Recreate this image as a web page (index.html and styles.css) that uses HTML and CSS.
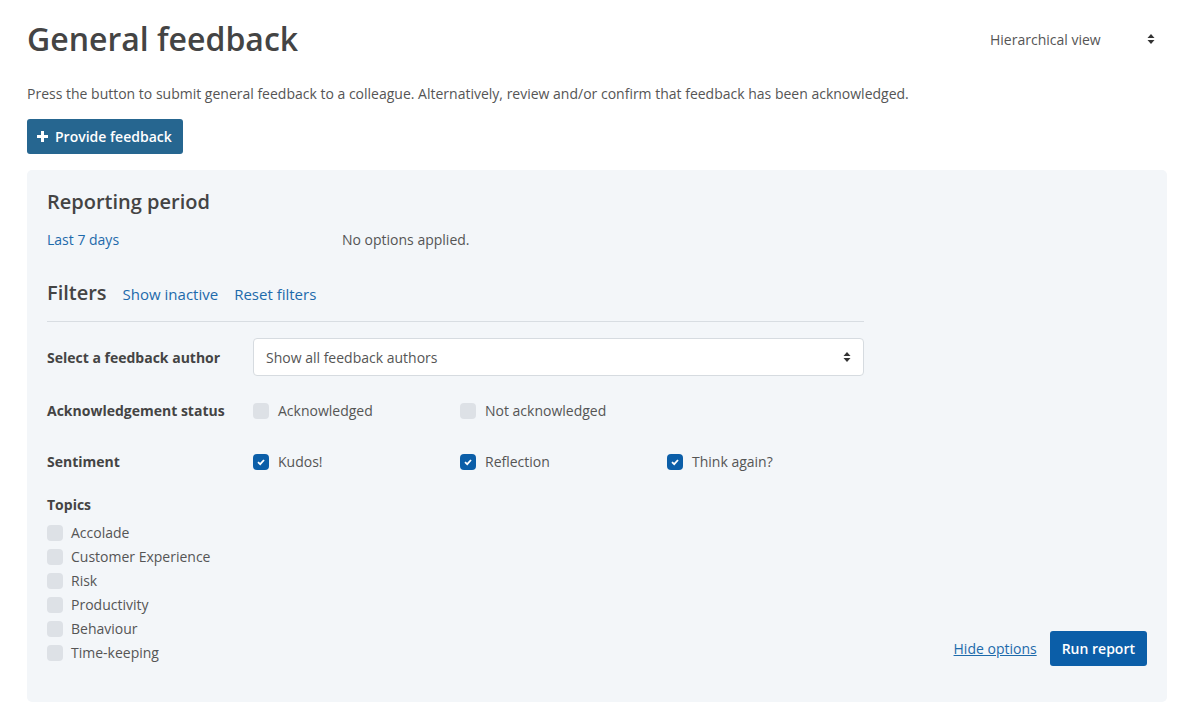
FILE: index.html
```html
<!DOCTYPE html>
<html lang="en">
<head>
<meta charset="utf-8">
<title>General feedback</title>
<link rel="stylesheet" href="styles.css">
</head>
<body>
<div class="page">
  <header class="page-header">
    <h1 class="title">General feedback</h1>
    <div class="view-select">
      <span>Hierarchical view</span>
      <svg class="updown" width="8" height="12" viewBox="0 0 8 12"><path d="M4 1 L7.5 5 H0.5 Z M4 11 L7.5 7 H0.5 Z" fill="#333"/></svg>
    </div>
  </header>
  <p class="intro">Press the button to submit general feedback to a colleague. Alternatively, review and/or confirm that feedback has been acknowledged.</p>
  <button class="btn-primary"><svg width="11" height="11" viewBox="0 0 11 11"><path d="M4 0h3v4h4v3H7v4H4V7H0V4h4z" fill="#fff"/></svg>Provide feedback</button>

  <section class="panel">
    <h2 class="panel-title">Reporting period</h2>
    <div class="period-row">
      <a class="link period-link">Last 7 days</a>
      <span class="muted">No options applied.</span>
    </div>

    <div class="filters-head">
      <h2 class="panel-title">Filters</h2>
      <a class="link head-link">Show inactive</a>
      <a class="link head-link">Reset filters</a>
    </div>

    <div class="filters">
      <div class="row row-select">
        <label class="lbl">Select a feedback author</label>
        <div class="select">
          <span>Show all feedback authors</span>
          <svg class="updown" width="8" height="12" viewBox="0 0 8 12"><path d="M4 1 L7.5 5 H0.5 Z M4 11 L7.5 7 H0.5 Z" fill="#333"/></svg>
        </div>
      </div>
      <div class="row row-ack">
        <label class="lbl">Acknowledgement status</label>
        <div class="checks">
          <span class="check"><i class="box"></i>Acknowledged</span>
          <span class="check"><i class="box"></i>Not acknowledged</span>
        </div>
      </div>
      <div class="row row-sent">
        <label class="lbl">Sentiment</label>
        <div class="checks">
          <span class="check"><i class="box on"><svg width="10" height="8" viewBox="0 0 10 8"><path d="M2 4.2 L4.2 6.2 L8 2" stroke="#fff" stroke-width="1.8" fill="none"/></svg></i>Kudos!</span>
          <span class="check"><i class="box on"><svg width="10" height="8" viewBox="0 0 10 8"><path d="M2 4.2 L4.2 6.2 L8 2" stroke="#fff" stroke-width="1.8" fill="none"/></svg></i>Reflection</span>
          <span class="check"><i class="box on"><svg width="10" height="8" viewBox="0 0 10 8"><path d="M2 4.2 L4.2 6.2 L8 2" stroke="#fff" stroke-width="1.8" fill="none"/></svg></i>Think again?</span>
        </div>
      </div>
    </div>

    <div class="bottom">
      <div class="topics">
        <div class="lbl topics-lbl">Topics</div>
        <span class="check"><i class="box"></i>Accolade</span>
        <span class="check"><i class="box"></i>Customer Experience</span>
        <span class="check"><i class="box"></i>Risk</span>
        <span class="check"><i class="box"></i>Productivity</span>
        <span class="check"><i class="box"></i>Behaviour</span>
        <span class="check"><i class="box"></i>Time-keeping</span>
      </div>
      <div class="actions">
        <a class="link underline">Hide options</a>
        <button class="btn-run">Run report</button>
      </div>
    </div>
  </section>
</div>
</body>
</html>
```
FILE: styles.css
```css
* { box-sizing: border-box; }
html, body { margin: 0; padding: 0; background: #fff; }
body {
  font-family: "Open Sans", "Liberation Sans", sans-serif;
  font-size: 14px;
  color: #555;
  line-height: 1.5;
}
.page { padding: 0 23px 10px 27px; }
.page-header {
  display: flex;
  justify-content: space-between;
  align-items: flex-start;
  padding-top: 19px;
}
.title {
  margin: 0;
  font-size: 32px;
  font-weight: 600;
  color: #444;
  line-height: 40px;
}
.view-select {
  display: flex;
  align-items: center;
  justify-content: space-between;
  width: 189px;
  height: 40px;
  padding: 0 12px;
  color: #555;
}
.updown { display: block; }
.intro { margin: 24px 0 15px; }
.btn-primary {
  display: inline-flex;
  align-items: center;
  gap: 7px;
  height: 35px;
  padding: 0 11px 0 10px;
  border: 0;
  border-radius: 3px;
  background: #266690;
  color: #fff;
  font: 600 14px "Open Sans", sans-serif;
}
.panel {
  margin-top: 16px;
  background: #f3f6f9;
  border-radius: 5px;
  padding: 17px 20px 37px;
}
.panel-title {
  margin: 0;
  font-size: 20px;
  font-weight: 600;
  color: #444;
  line-height: 30px;
}
.link { color: #1d6aab; cursor: pointer; }
.underline { text-decoration: underline; }
.period-row {
  display: flex;
  margin-top: 12px;
}
.period-link { width: 295px; }
.muted { color: #555; }
.filters-head {
  display: flex;
  align-items: baseline;
  gap: 16px;
  margin-top: 28px;
  width: 817px;
  padding-bottom: 13px;
  border-bottom: 1px solid #d8dde2;
}
.head-link { font-size: 15px; }
.filters { width: 817px; }
.row {
  display: flex;
  align-items: center;
}
.row-select { margin-top: 16px; }
.row-ack { margin-top: 24px; }
.row-sent { margin-top: 30px; }
.lbl {
  flex: none;
  width: 206px;
  font-weight: 700;
  color: #444;
}
.select {
  flex: 1;
  height: 38px;
  display: flex;
  align-items: center;
  justify-content: space-between;
  padding: 0 12px;
  background: #fff;
  border: 1px solid #d6dbe0;
  border-radius: 4px;
  color: #555;
}
.checks { display: flex; }
.checks .check { width: 207px; }
.check {
  display: flex;
  align-items: center;
  gap: 9px;
  color: #555;
}
.box {
  width: 16px;
  height: 16px;
  border-radius: 4px;
  background: #dde1e6;
  display: inline-flex;
  align-items: center;
  justify-content: center;
  flex: none;
}
.box.on { background: #0b5ea8; }
.bottom {
  display: flex;
  justify-content: space-between;
  align-items: flex-end;
  margin-top: 22px;
}
.topics { display: flex; flex-direction: column; }
.topics-lbl { margin-bottom: 6px; }
.topics .check { line-height: 24px; gap: 8px; }
.actions {
  display: flex;
  align-items: center;
  gap: 13px;
  margin-bottom: -1px;
}
.btn-run {
  height: 35px;
  padding: 0 12px;
  border: 0;
  border-radius: 3px;
  background: #0b5ea8;
  color: #fff;
  font: 600 14px "Open Sans", sans-serif;
}
```
